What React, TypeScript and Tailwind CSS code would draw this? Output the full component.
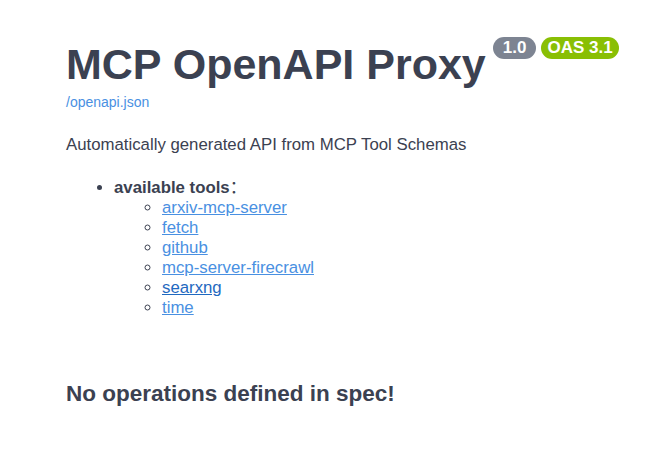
const tools = [
  { name: 'arxiv-mcp-server', hover: false },
  { name: 'fetch', hover: false },
  { name: 'github', hover: false },
  { name: 'mcp-server-firecrawl', hover: false },
  { name: 'searxng', hover: true },
  { name: 'time', hover: false },
]

export default function App() {
  return (
    <div
      className="min-h-screen w-full bg-white text-[#3b4151]"
      style={{ fontFamily: '"Liberation Sans", "Noto Sans CJK SC", Arial, sans-serif' }}
    >
      <div className="pl-[66px] pr-5 pt-[38px]">
        <div className="mb-5">
          <h2 className="flex items-start text-[43px] font-bold leading-[52px]">
            <span>MCP OpenAPI Proxy</span>
            <span className="ml-[7px] -mt-[1px] flex gap-[5px]">
              <small className="rounded-full bg-[#7d8492] px-[10px] text-[17px] font-bold leading-[22px] text-white">
                1.0
              </small>
              <small className="rounded-full bg-[#89bf04] px-[6px] text-[17px] font-bold leading-[22px] text-white">
                OAS 3.1
              </small>
            </span>
          </h2>
          <a href="#" className="text-[14px] leading-[18px] text-[#4990e2]">
            /openapi.json
          </a>
        </div>
        <p className="mt-[14px] text-[16.8px] leading-[22px]">Automatically generated API from MCP Tool Schemas</p>
        <ul className="mt-[22px] list-disc pl-[48px] text-[16.8px] leading-[20px]">
          <li>
            <strong>available tools</strong>
            <span className="font-normal">：</span>
            <ul className="list-[circle] pl-[48px]">
              {tools.map((t) => (
                <li key={t.name}>
                  <a
                    href="#"
                    className={t.hover ? 'text-[#1f69c0] underline' : 'text-[#4990e2] underline'}
                  >
                    {t.name}
                  </a>
                </li>
              ))}
            </ul>
          </li>
        </ul>
        <h3 className="mt-[61px] text-[22.5px] font-bold leading-[30px]">No operations defined in spec!</h3>
      </div>
    </div>
  )
}
